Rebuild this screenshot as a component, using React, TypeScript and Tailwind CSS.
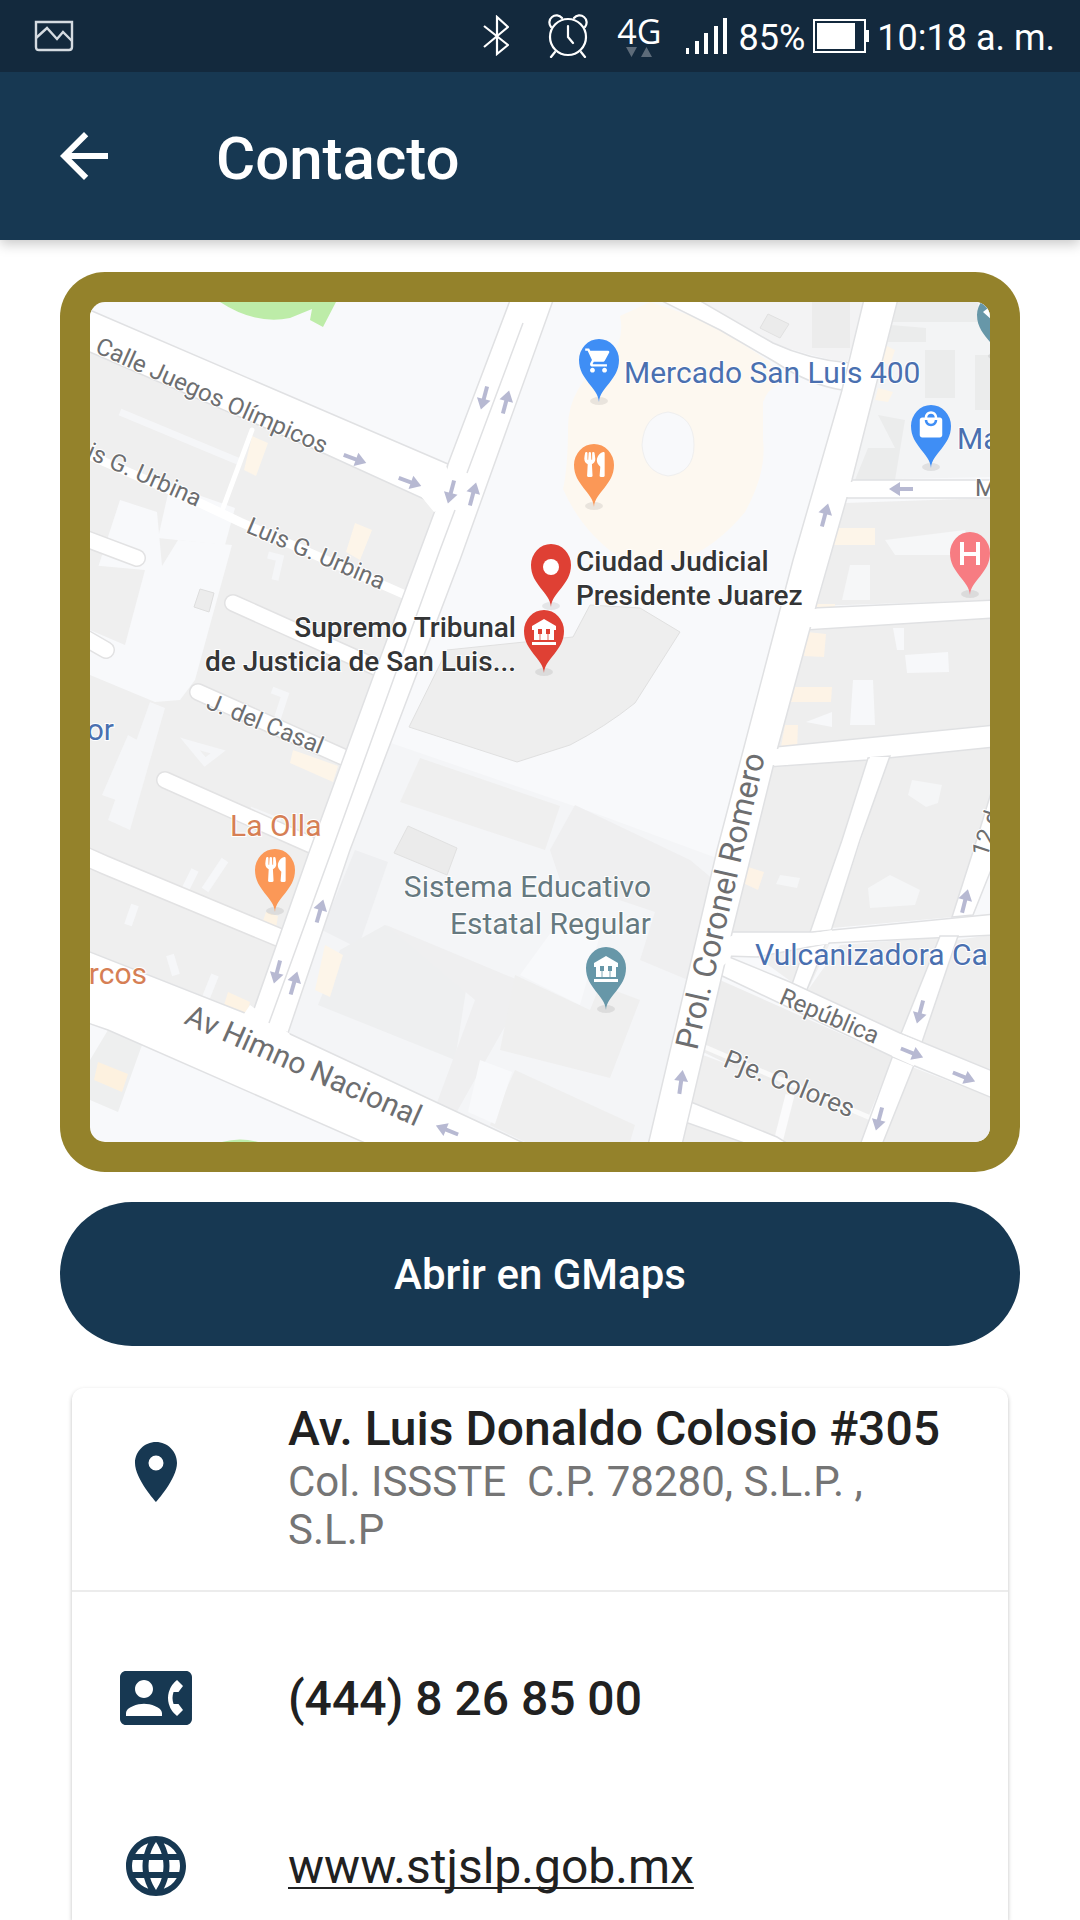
import type { ReactNode } from "react";
import {
  MdArrowBack,
  MdContactPhone,
  MdLanguage,
  MdLocalMall,
  MdPlace,
  MdShoppingCart,
} from "react-icons/md";
import { FaUtensils } from "react-icons/fa";

function StatusBar() {
  return (
    <div className="flex h-[72px] items-center justify-between bg-[#13293d] pl-[34px] pr-[25px] text-white">
      <svg className="h-8 w-10" viewBox="0 0 40 32" fill="none" stroke="#d5dbe1" strokeWidth="2.4" role="img" aria-label="Captura guardada">
        <path d="M2 2h36v25q0 3-3 3H5q-3 0-3-3z" />
        <path d="M2 18 13 8l10 11 6-7 9 9" />
      </svg>
      <div className="flex items-center">
        <svg className="h-[42px] w-[26px]" viewBox="0 0 26 42" fill="none" stroke="white" strokeWidth="2.2" role="img" aria-label="Bluetooth">
          <path d="M1 11 25 30 14 39V2l11 10L1 32" />
        </svg>
        <svg className="ml-[39px] h-11 w-10" viewBox="0 0 40 44" fill="none" stroke="white" strokeWidth="2.2" strokeLinecap="round" role="img" aria-label="Alarma">
          <ellipse cx="20" cy="23" rx="18" ry="18" />
          <path d="M20 12v11l5 6M7 38l-4 5M33 38l4 5" />
          <path d="M3 13a6.500 6.500 0 1 1 11-9M37 13a6.500 6.500 0 1 0-11-9" />
        </svg>
        <div className="ml-[29px] flex flex-col items-center pt-0.5">
          <span className="font-['Open_Sans'] text-[34px] leading-[30px]">4G</span>
          <svg className="h-3 w-[26px]" viewBox="0 0 26 12" fill="#5d6b79" aria-hidden="true">
            <path d="M0 1h11L5.500 11zM15 11h11L20.500 1z" />
          </svg>
        </div>
        <svg className="ml-[24px] h-9 w-[41px]" viewBox="0 0 41 36" fill="white" role="img" aria-label="Señal">
          <path d="M0 30h3v6H0zM9 23h4v13H9zM18 15h4v21h-4zM28 8h4v28h-4zM37 0h4v36h-4z" />
        </svg>
        <span className="ml-3 text-[36px] leading-10 pt-1">85%</span>
        <svg className="ml-2 h-[34px] w-14" viewBox="0 0 56 34" fill="none" role="img" aria-label="Batería">
          <path d="M1 1h51v32H1z" stroke="white" strokeWidth="2" />
          <path d="M4 4h38v26H4zM53 11h3v12h-3z" fill="white" />
        </svg>
        <span className="ml-2 text-[36px] leading-10 pt-1">10:18 a. m.</span>
      </div>
    </div>
  );
}

function Pin({ x, y, color, children }: { x: number; y: number; color: string; children?: ReactNode }) {
  return (
    <g transform={`translate(${x} ${y})`}>
      <ellipse cx="0" cy="41" rx="9" ry="4" fill="#000" opacity="0.08" />
      <path d="M0 42C-1 27-20 20-20 0a20 21 0 0 1 40 0C20 20 1 27 0 42z" fill={color} />
      {children}
    </g>
  );
}

function Institution({ color }: { color: string }) {
  return (
    <g fill="white">
      <path d="M-12-5 0-12 12-5v4h-24z" />
      <path d="M-10-1h20V9h-20z" />
      <path d="M-12 11h24v3h-24z" />
      <path d="M-6-2h4v5h-4zM2-2h4v5H2z" fill={color} />
      <path d="M-5 3h2v6h-2zM3 3h2v6H3z" fill={color} opacity="0.4" />
    </g>
  );
}

const arrows = [
  [355, 459, 20], [410, 482, 20], [484, 398, 105], [506, 402, -75], [451, 492, 105], [473, 494, -75],
  [901, 489, 180], [825, 515, -75], [320, 911, -74], [277, 972, 105], [294, 983, -74], [447, 1130, 202],
  [681, 1082, -82], [920, 1012, 105], [912, 1053, 22], [964, 1077, 22], [879, 1119, 105], [965, 901, -76],
];

const streets: { text: string; x: number; y: number; angle: number; size: number; anchor?: "end" }[] = [
  { text: "Calle Juegos Olímpicos", x: 94, y: 352, angle: 24, size: 24 },
  { text: "is G. Urbina", x: 197, y: 507, angle: 24, size: 24, anchor: "end" },
  { text: "Luis G. Urbina", x: 245, y: 532, angle: 23, size: 24 },
  { text: "J. del Casal", x: 205, y: 708, angle: 22, size: 24 },
  { text: "Av Himno Nacional", x: 183, y: 1023, angle: 24, size: 30 },
  { text: "Prol. Coronel Romero", x: 697, y: 1051, angle: -77, size: 32 },
  { text: "República", x: 778, y: 1003, angle: 23, size: 24 },
  { text: "Pje. Colores", x: 722, y: 1066, angle: 22, size: 26 },
  { text: "12 d", x: 987, y: 858, angle: -72, size: 24 },
  { text: "M", x: 975, y: 496, angle: 0, size: 24 },
];

function CityMap() {
  return (
    <svg
      className="block w-full rounded-[15px]"
      viewBox="90 302 900 840"
      fontFamily="Roboto, sans-serif"
      role="img"
      aria-label="Mapa de Ciudad Judicial Presidente Juarez"
    >
      <rect x="90" y="302" width="900" height="840" fill="#f8f9fb" />

      {/* park and stadium */}
      <path d="M220 302Q255 325 290 318L312 309 310 320 323 327 336 302z" fill="#bdeca8" />
      <path d="M222 1142q18-5 36 0z" fill="#bdeca8" />
      <path d="M650 302 620 316q5 24-10 40-42 30-42 71 0 40-5 62 20 45 60 71h60q35-15 62-48 22-40 18-72v-38q4-12 16-18l-9-22-60-40z" fill="#fdf8f0" />
      <path d="M668 412q26 4 26 33 0 28-26 31-24-4-26-31 2-30 26-33z" fill="#f8f9fb" stroke="#efefef" />

      {/* west blocks */}
      <path d="M90 352 323 453 437 505 252 1015 90 952z" fill="#efefef" />
      <path d="M90 592 120 500 157 512 162 566 178 540 232 545 210 625 195 680 180 700 155 702 90 675z" fill="#f8f9fb" />
      <path d="M170 485 235 508 225 545 158 538z" fill="#f8f9fb" />
      <path d="M90 565 145 570 125 645 90 630z" fill="#efefef" />
      <path d="M200 589l14 4-5 19-15-5z" fill="#ececec" stroke="#dedede" />
      <path d="M128 735 137 740 116 800 102 795zM150 702 165 708 130 830 108 820z" fill="#f5f6f8" />
      <path d="M120 412 240 462M250 810 280 822 M272 690 285 695 272 735M268 555 280 558 275 580M190 744 218 752 205 762z" fill="none" stroke="#f5f6f8" strokeWidth="7" />
      <path d="M205 890 225 860M180 900 195 870M135 905 128 925M215 975 205 1000M170 955 176 975" fill="none" stroke="#f6f7f9" strokeWidth="8" />
      <path d="M252 436 268 443 256 476 244 470zM355 523 372 530 360 560 346 552zM293 750 338 766 333 782 290 763z" fill="#fdf5e9" />
      <path d="M266 912 278 916 276 928 262 924zM228 992 250 1002 247 1014 224 1005z" fill="#fdf3e4" />

      {/* court house and school grounds */}
      <path d="M590 605 640 608 680 632 635 703Q605 727 570 745L517 762 409 727 447 650 573 637z" fill="#eeeeee" stroke="#e0e0e0" />
      <path d="M350 850 388 742 455 765 600 815 722 860 650 1142H517L288 1033z" fill="#f4f5f7" />
      <path d="M420 758 560 806 545 850 400 802z" fill="#efefef" />
      <path d="M408 826 457 848 447 875 394 853z" fill="#ebebeb" stroke="#e1e1e1" />
      <path d="M355 850 388 862 358 948 322 930z" fill="#eeeff1" />
      <path d="M575 805 690 860 720 885 700 985 640 960 655 912 560 880 550 850z" fill="#efeff0" />
      <path d="M385 925 470 965 455 1060 318 1005 340 950z" fill="#eeeff0" />
      <path d="M386 925 470 960 530 985 500 1035 455 1115 435 1108 475 1000z" fill="#efeff0" />
      <path d="M515 975 590 1010 600 985 640 1000 610 1078 500 1050z" fill="#efefef" />
      <path d="M515 1070 635 1125 630 1142H525L490 1125z" fill="#efefef" />
      <path d="M480 1060 512 1072 495 1124 468 1112zM560 920 600 935 580 1005 520 975z" fill="#f8f9fb" />
      <path d="M325 945 343 955 330 997 315 990z" fill="#fdf5e9" />
      <path d="M108 1030 142 1045 118 1112 90 1100V1060z" fill="#eeefef" />
      <path d="M98 1062 128 1074 122 1092 94 1080z" fill="#fdf1df" />

      {/* east blocks */}
      <path d="M703 302H865L847 363Q805 355 773 343z" fill="#f3f3f4" />
      <path d="M812 302H850V348H812z" fill="#ececec" />
      <path d="M768 314 789 324 780 338 760 328z" fill="#ebebeb" stroke="#e0e0e0" />
      <path d="M897 302H990V477L852 480z" fill="#f3f4f5" />
      <path d="M897 302H978V322H893zM891 325 926 328V342H888zM925 350H955V398H925zM975 355H990V410H975zM878 415 905 420 895 480H855L868 448H895z" fill="#ebecec" />
      <path d="M885 345 895 350 890 365 882 362zM878 388 893 392 888 402 875 400z" fill="#fdf5e9" />
      <path d="M845 503 990 498V600L817 606z" fill="#eeeeee" />
      <path d="M838 530H873V545H838zM885 540 965 530 975 555H895zM850 565H870V600H842z" fill="#f6f7f8" />
      <path d="M834 528H875V545H832zM817 604H835V612H815z" fill="#fdf5e9" />
      <path d="M809 630 990 618V725L778 747z" fill="#eeeeee" />
      <path d="M905 655 948 652 949 672 907 673zM853 680H873L875 725H850zM806 722 832 712V727zM893 628H904V650H897z" fill="#f7f8fa" />
      <path d="M807 632 826 634 824 657 804 656zM795 687 832 687 831 702 791 702zM785 725 798 725 797 750 780 752z" fill="#fdf3e6" />
      <path d="M772 767 868 760 842 840 812 932 732 933z" fill="#eeeeee" />
      <path d="M888 758 990 747V810L953 917 832 928z" fill="#eeeeee" />
      <path d="M912 780 942 785 938 803 926 807 908 795zM780 875 800 878 797 888 776 884zM868 888 890 875 920 890 915 905 870 908z" fill="#f5f6f7" />
      <path d="M748 867 764 872 758 890 743 883z" fill="#fdf3e6" />
      <path d="M757 957 830 943 808 990 793 983zM840 945 940 937 900 1037 808 990z" fill="#efefef" />
      <path d="M957 940 990 935V1070L918 1040z" fill="#efefef" />
      <path d="M720 980 893 1057 863 1130 703 1052z" fill="#ededed" />
      <path d="M703 1055 870 1118 863 1142H777L689 1103zM687 1123 743 1142H683zM912 1067 990 1097V1142H883z" fill="#efefef" />
      <path d="M790 1095 778 1142" stroke="#fbfbfc" strokeWidth="9" />
      <path d="M700 1045 880 1122" stroke="#fafafa" strokeWidth="5" />

      {/* narrow streets */}
      <g fill="none" strokeLinecap="round">
        <g stroke="#e2e2e3">
          <path d="M76 535 137 558M80 635 106 650M233 603 378 668M198 692 350 760M165 780 318 848" strokeWidth="18" />
          <path d="M80 854 105 865 290 942" strokeWidth="20" />
        </g>
        <g stroke="#ffffff">
          <path d="M76 535 137 558M80 635 106 650M233 603 378 668M198 692 350 760M165 780 318 848" strokeWidth="15" />
          <path d="M80 854 105 865 290 942" strokeWidth="17" />
          <path d="M84 453 200 503 240 522 410 597" strokeWidth="9" />
          <path d="M252 430 223 508" strokeWidth="5" />
        </g>
      </g>

      {/* avenues */}
      <g fill="#ffffff" stroke="#e0e1e3" strokeWidth="1.500">
        <path d="M650 295 720 330 775 362Q810 385 842 390L850 363Q810 360 773 343L690 295z" />
        <path d="M845 480H995V498H840zM812 608 995 600V618L806 630zM775 747 995 725V747L888 758 868 760 768 767z" />
        <path d="M868 758 842 840 790 990 806 992 832 928 860 840 890 756z" />
        <path d="M728 932 812 932 995 914V935L830 943 757 957 725 956z" />
        <path d="M952 917 975 845 995 780V860L973 915z" />
        <path d="M940 936 900 1036 860 1145H882L916 1060 958 936z" />
        <path d="M722 954 790 982 900 1033 995 1072V1099L893 1057 718 974z" />
        <path d="M686 1100 777 1137 790 1145H750L685 1122z" />
        <path d="M865 295 842 390 793 560 717 850 648 1145H682L732 933 778 747 817 603 852 480 899 295z" />
        <path d="M85 308 448 464 437 505 323 453 85 350z" />
        <path d="M512 295 448 464 437 505 373 677 308 855 250 1020 288 1033 350 850 460 560 555 295z" />
        <path d="M85 950 250 1015 288 1033 530 1146H372L108 1030 85 1022z" />
      </g>
      <g fill="#ffffff">
        <path d="M430 460 446 466 462 500 434 512 420 495zM250 1005 290 1034 286 1040 240 1020z" />
        <path d="M870 757H887L884 765H868zM725 938 735 935 730 960 715 972 712 958zM815 933 832 930 828 944 808 946zM900 1034 920 1042 914 1066 892 1056zM846 482H855V497H842zM810 609H822V627H804zM774 749H788V765H770z" />
      </g>
      <path d="M523 323 467 473M455 510 440 550 332 850 269 1023" fill="none" stroke="#e0e1e3" strokeWidth="1.500" />

      <g fill="none" stroke="#b7b9d2" strokeWidth="4">
        {arrows.map(([x, y, angle]) => (
          <g key={`${x}-${y}`} transform={`translate(${x} ${y}) rotate(${angle})`}>
            <path d="M-12 0H3" />
            <path d="M1-7 12 0 1 7z" fill="#b7b9d2" stroke="none" />
          </g>
        ))}
      </g>

      <g fill="#6d6e70" stroke="#ffffff" strokeWidth="2" paintOrder="stroke">
        {streets.map((s) => (
          <text
            key={s.text}
            transform={`translate(${s.x} ${s.y}) rotate(${s.angle})`}
            fontSize={s.size}
            textAnchor={s.anchor ?? "start"}
          >
            {s.text}
          </text>
        ))}
      </g>

      <g fontSize="30" fill="#4a70b0" stroke="#ffffff" strokeWidth="2" paintOrder="stroke">
        <text x="624" y="383">Mercado San Luis 400</text>
        <text x="957" y="449">Ma</text>
        <text x="114" y="740" textAnchor="end">or</text>
        <text x="755" y="965">Vulcanizadora Ca</text>
        <g fill="#d67f55">
          <text x="230" y="836">La Olla</text>
          <text x="147" y="984" textAnchor="end">rcos</text>
        </g>
        <g fill="#667980" textAnchor="end">
          <text x="651" y="897">Sistema Educativo</text>
          <text x="651" y="934">Estatal Regular</text>
        </g>
      </g>
      <g fontSize="28" fontWeight="500" fill="#343536" stroke="#ffffff" strokeWidth="2" paintOrder="stroke">
        <text x="576" y="571">Ciudad Judicial</text>
        <text x="576" y="605">Presidente Juarez</text>
        <g textAnchor="end">
          <text x="516" y="637">Supremo Tribunal</text>
          <text x="516" y="671">de Justicia de San Luis...</text>
        </g>
      </g>

      <Pin x={599} y={360} color="#3f8ef5">
        <MdShoppingCart x={-15} y={-14} size={29} color="white" />
      </Pin>
      <Pin x={594} y={465} color="#fb9857">
        <FaUtensils x={-12} y={-13} size={25} color="white" />
      </Pin>
      <Pin x={931} y={426} color="#3f8ef5">
        <MdLocalMall x={-15} y={-16} size={30} color="white" />
      </Pin>
      <Pin x={970} y={553} color="#f77c82">
        <path d="M-8-11V12M8-11V12M-8 1H8" stroke="white" strokeWidth="4" />
      </Pin>
      <Pin x={997} y={315} color="#6797a8">
        <path d="M-14-3-4-11V6z" fill="white" />
      </Pin>
      <Pin x={551} y={565} color="#df4034">
        <circle cx="0" cy="2" r="8" fill="white" />
      </Pin>
      <Pin x={544} y={631} color="#df4034">
        <Institution color="#df4034" />
      </Pin>
      <Pin x={275} y={870} color="#fb9857">
        <FaUtensils x={-12} y={-13} size={25} color="white" />
      </Pin>
      <Pin x={606} y={968} color="#6797a8">
        <Institution color="#6797a8" />
      </Pin>
    </svg>
  );
}

export default function App() {
  return (
    <div className="flex min-h-screen flex-col bg-white font-[Roboto,sans-serif]">
      <header className="relative bg-[#173852] text-white shadow-[0_4px_12px_rgba(0,0,0,0.22)]">
        <StatusBar />
        <div className="flex h-[168px] items-center px-12">
          <button type="button" aria-label="Atrás">
            <MdArrowBack className="size-[72px]" />
          </button>
          <h1 className="ml-24 pt-1.5 text-[60px] font-medium leading-[70px]">Contacto</h1>
        </div>
      </header>

      <main className="flex grow flex-col px-[60px] pt-8">
        <div className="rounded-[45px] bg-[#94822b] p-[30px]">
          <CityMap />
        </div>

        <button
          type="button"
          className="mt-[30px] h-36 rounded-full bg-[#173852] text-[42px] font-medium text-white"
        >
          Abrir en GMaps
        </button>

        <section className="mx-3 mt-[42px] grow rounded-t-xl bg-white text-[#212121] shadow-[0_2px_4px_rgba(0,0,0,0.25)]">
          <div className="flex items-start border-b-2 border-[#ececec] px-12 pb-9 pt-3">
            <MdPlace className="mt-9 size-[72px] shrink-0 text-[#173852]" />
            <div className="ml-24">
              <p className="text-[48px] font-medium leading-[58px]">Av. Luis Donaldo Colosio #305</p>
              <p className="whitespace-pre-wrap text-[42px] leading-[48px] text-[#757575]">
                {"Col. ISSSTE  C.P. 78280, S.L.P. , S.L.P"}
              </p>
            </div>
          </div>
          <div className="flex items-center px-12 pb-12 pt-[70px]">
            <MdContactPhone className="size-[72px] shrink-0 text-[#173852]" />
            <p className="ml-24 pt-0.5 text-[48px] font-medium leading-[56px]">(444) 8 26 85 00</p>
          </div>
          <div className="flex items-center px-12 pb-4 pt-12">
            <MdLanguage className="size-[72px] shrink-0 text-[#173852]" />
            <a href="#sitio" className="ml-24 pt-0.5 text-[48px] leading-[56px] underline decoration-2 underline-offset-4 [text-decoration-skip-ink:none]">
              www.stjslp.gob.mx
            </a>
          </div>
        </section>
      </main>
    </div>
  );
}
